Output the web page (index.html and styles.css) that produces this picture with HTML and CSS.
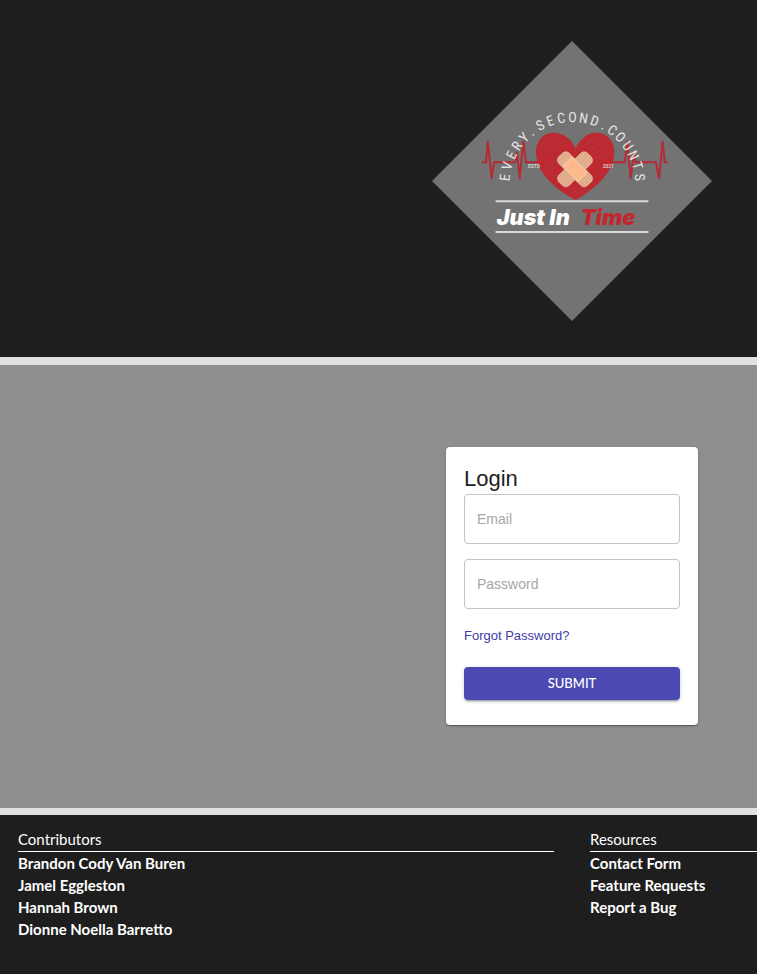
FILE: index.html
```html
<!DOCTYPE html>
<html lang="en">
<head>
<meta charset="utf-8">
<meta name="viewport" content="width=device-width, initial-scale=1">
<title>Just In Time - Login</title>
<link rel="stylesheet" href="styles.css">
</head>
<body>
<header class="hero">
  <svg class="logo" viewBox="0 0 840 840" role="img" aria-label="Just In Time">
    <defs>
      <pattern id="gauze" width="8" height="8" patternUnits="userSpaceOnUse">
        <rect width="8" height="8" fill="#e2ac8b"/>
        <circle cx="2" cy="2" r="1.5" fill="#f6d3b8"/>
        <circle cx="6" cy="6" r="1.5" fill="#cf9573"/>
      </pattern>
      <path id="arc" d="M112 255A189 189 0 0 1 490 255"/>
    </defs>
    <path d="M420 0L840 420L420 840L0 420Z" fill="#737373"/>
    <g transform="translate(120 177)">
      <g class="pulse">
        <path d="M30 187H42L47 125L59 235L66 187H130L135 157L143 235L154 125L162 187H204"/>
        <path d="M420 187H458L466 125L476 235L486 160L491 187H552L561 235L572 125L578 187H588"/>
      </g>
      <path d="M311 146C297 112 268 98 245 98C214 98 192 122 192 155C192 215 245 265 311 300C375 262 427 215 427 155C427 122 404 98 373 98C348 98 324 115 311 146Z" fill="#bd2831"/>
      <path class="scratches" d="M205 150L262 112M198 174L278 124M215 205L262 174M225 217L258 196M240 238L268 218M328 140L398 104M345 150L418 118M362 160L424 138M376 182L424 160M290 285L352 246M300 292L344 266M270 265L296 250M196 140L230 116M365 235L402 210"/>
      <g transform="translate(309 208)">
        <rect class="strip" x="-61" y="-22" width="122" height="44" rx="15" transform="rotate(-45)"/>
        <g transform="rotate(45)">
          <rect class="strip" x="-61" y="-22" width="122" height="44" rx="15"/>
          <rect x="-32" y="-19" width="64" height="38" rx="3" fill="#fdb98c" stroke="#f5cfab" stroke-width="3"/>
        </g>
      </g>
      <text class="motto"><textPath href="#arc"><tspan x="21 54 87 116 147 172 203 234 265 297 328 360 389 416 445 477 508 539 572">EVERY.SECOND.COUNTS</tspan></textPath></text>
      <text class="since" x="186" y="203">ESTD</text>
      <text class="since" x="409" y="203">2021</text>
      <path d="M73 304H527M73 396H527" stroke="#dadada" stroke-width="6" stroke-linecap="round"/>
      <text class="brand" x="74" y="375">Just In</text>
      <text class="brand brand-accent" x="326" y="375">Time</text>
    </g>
  </svg>
</header>

<main class="stage">
  <form class="card">
    <h1 class="card-title">Login</h1>
    <div class="field">
      <input class="field-input" id="email" type="email">
      <label class="field-label" for="email">Email</label>
    </div>
    <div class="field">
      <input class="field-input" id="password" type="password">
      <label class="field-label" for="password">Password</label>
    </div>
    <a class="forgot" href="#forgot">Forgot Password?</a>
    <button class="submit" type="submit">SUBMIT</button>
  </form>
</main>

<footer class="footer">
  <section class="footer-group">
    <h2 class="footer-title">Contributors</h2>
    <a class="footer-link" href="#brandon">Brandon Cody Van Buren</a>
    <a class="footer-link" href="#jamel">Jamel Eggleston</a>
    <a class="footer-link" href="#hannah">Hannah Brown</a>
    <a class="footer-link" href="#dionne">Dionne Noella Barretto</a>
  </section>
  <section class="footer-group footer-group-last">
    <h2 class="footer-title">Resources</h2>
    <a class="footer-link" href="#contact">Contact Form</a>
    <a class="footer-link" href="#features">Feature Requests</a>
    <a class="footer-link" href="#bug">Report a Bug</a>
  </section>
</footer>
</body>
</html>
```

FILE: styles.css
```css
* {
  box-sizing: border-box;
}

body {
  margin: 0;
  min-height: 100vh;
  display: flex;
  flex-direction: column;
  background: #e3e1e0;
  font-family: "Liberation Sans", Arial, sans-serif;
}

.hero,
.stage {
  display: grid;
  grid-template-columns: 1fr 370px;
  justify-items: center;
}

.hero {
  padding: 41px 0 36px;
  border-bottom: 8px solid #e3e1e0;
  background: #1e1e1e;
}

.logo {
  grid-column: 2;
  display: block;
  width: 280px;
}

.pulse {
  fill: none;
  stroke: #b52a34;
  stroke-width: 6;
  stroke-linejoin: round;
}

.scratches {
  fill: none;
  stroke: #a44349;
  stroke-width: 2;
}

.strip {
  fill: url(#gauze);
  stroke: #e9bd9c;
  stroke-width: 2;
}

.motto {
  font-family: "Roboto Condensed", "Liberation Sans Narrow", Roboto, sans-serif;
  font-size: 42px;
  text-anchor: middle;
  fill: #e6e6e6;
}

.since {
  font-family: "Roboto Condensed", "Liberation Sans Narrow", Roboto, sans-serif;
  font-size: 17px;
  text-anchor: middle;
  fill: #eeeeee;
}

.brand {
  font-family: Inter, sans-serif;
  font-size: 65px;
  font-weight: 900;
  font-style: italic;
  fill: #ffffff;
}

.brand-accent {
  fill: #c1272d;
}

.stage {
  padding: 82px 0 83px;
  border-bottom: 7px solid #e3e1e0;
  background: #8f8d8e;
}

.card {
  grid-column: 2;
  width: 252px;
  padding: 18px 18px 25px;
  display: flex;
  flex-direction: column;
  background: #ffffff;
  border-radius: 4px;
  box-shadow: 0 2px 1px -1px rgba(0, 0, 0, 0.2), 0 1px 1px rgba(0, 0, 0, 0.14), 0 1px 3px rgba(0, 0, 0, 0.12);
}

.card-title {
  margin: 0 0 2px;
  font-size: 22px;
  font-weight: 400;
  line-height: 27px;
  color: #212121;
}

.field {
  display: grid;
  align-items: center;
  margin-bottom: 15px;
}

.field-input,
.field-label {
  grid-area: 1 / 1;
}

.field-input {
  width: 100%;
  height: 50px;
  padding: 0 12px;
  border: 1px solid #c4c4c4;
  border-radius: 4px;
  background: transparent;
  font: inherit;
  font-size: 14px;
}

.field-label {
  padding-left: 13px;
  font-size: 14px;
  line-height: 20px;
  color: #a6a6a6;
  pointer-events: none;
}

.forgot {
  margin-top: 4px;
  font-size: 13px;
  line-height: 16px;
  color: #3f3ba8;
  text-decoration: none;
}

.submit {
  height: 33px;
  margin-top: 23px;
  padding: 0 0 2px;
  border: 0;
  border-radius: 4px;
  background: #4c4ab2;
  color: #ffffff;
  font-family: Lato, sans-serif;
  font-size: 13px;
  font-weight: 500;
  box-shadow: 0 3px 1px -2px rgba(0, 0, 0, 0.2), 0 2px 2px rgba(0, 0, 0, 0.14), 0 1px 5px rgba(0, 0, 0, 0.12);
}

.footer {
  flex: 1;
  display: grid;
  grid-template-columns: 1fr 185px;
  background: #1e1e1e;
  color: #ffffff;
  font-family: Lato, sans-serif;
  font-size: 15px;
}

.footer-group {
  display: flex;
  flex-direction: column;
  align-items: flex-start;
  padding: 14px 18px;
}

.footer-group-last {
  padding-right: 0;
}

.footer-title {
  align-self: stretch;
  margin: 0;
  padding-bottom: 2px;
  border-bottom: 1px solid #ffffff;
  font-size: 15px;
  font-weight: 400;
  line-height: 20px;
}

.footer-link {
  color: inherit;
  font-weight: 700;
  line-height: 22px;
  text-decoration: none;
}
```
